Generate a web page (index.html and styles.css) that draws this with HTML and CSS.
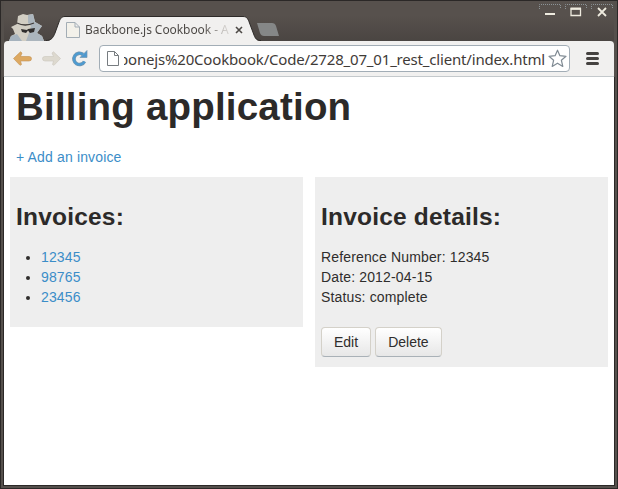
FILE: index.html
```html
<!DOCTYPE html>
<html lang="en">
<head>
<meta charset="utf-8">
<title>Backbone.js Cookbook</title>
<link rel="stylesheet" href="styles.css">
</head>
<body>
<div class="window">
  <header class="titlebar">
    <svg class="incognito" width="36" height="28" viewBox="0 0 36 28">
      <path d="M0 28 L2 23 L6 21 L4 16 L2 14 L8 11 L9 3 L14 1 L18 2 L24 1 L26 9 L33 13 L30 17 L28 20 L33 23 L35 28 Z" fill="#d2cec3"/>
      <path d="M19 10 L19 2 L24 1 L26 9 L33 13 L30 17 L28 20 L33 23 L35 28 H17 L20 20 L22 13 Z" fill="#abb5bd"/>
      <path d="M8 10 Q16 14 25 10" fill="none" stroke="#3d3937" stroke-width="1.3"/>
      <path d="M12 16 L18 17 L19 16 L26 15 L25 19 L21 20 L19 17.500 L17 20 L13 19 Z" fill="#302e2d"/>
      <path d="M0 28 L2 23 L8 21 L13 28 Z" fill="#a5b2bd"/>
    </svg>
    <div class="tab">
      <svg class="tab-shape" width="216" height="26" viewBox="0 0 216 26">
        <path d="M0 26 V25 C5 25 7 22 9 17 L13 6 C14.500 2 16 .500 19 .500 H197 C201 .500 202 3 203.500 7 L208 19 C209.500 23 211 25 215 25 V26 Z" fill="#f1f0ef"/>
        <path d="M0 24.500 C5 24.500 7 22 9 17 L13 6 C14.500 2 16 .500 19 .500 H197 C201 .500 202 3 203.500 7 L208 19 C209.500 23 211 24.500 215 24.500" fill="none" stroke="#2d2a28"/>
      </svg>
      <svg class="tab-page" width="14" height="16" viewBox="0 0 14 16"><path d="M.500 .500 H9 L13.500 5 V15.500 H.500 Z M9 .500 V5 H13.500" fill="#f3f1ea" stroke="#a3adb5"/></svg>
      <span class="tab-title">Backbone.js Cookbook - A</span>
      <svg class="tab-close" width="8" height="8" viewBox="0 0 8 8"><path d="M1 1 L7 7 M7 1 L1 7" stroke="#4d4946" stroke-width="1.600"/></svg>
    </div>
    <svg class="new-tab" width="24" height="15" viewBox="0 0 24 15"><path d="M1 1 H16 Q19 1 20 4 L23 14 H8 Q5 14 4 11 Z" fill="#858787"/></svg>
    <div class="controls">
      <svg width="22" height="14" viewBox="0 0 22 14"><path d="M.500 5 V.500 H21.500 V5" fill="none" stroke="#8b9396" stroke-dasharray="1 1"/><path d="M6 10 H16" stroke="#eeebdf" stroke-width="2"/></svg>
      <svg width="22" height="14" viewBox="0 0 22 14"><path d="M.500 5 V.500 H21.500 V5" fill="none" stroke="#8b9396" stroke-dasharray="1 1"/><path d="M6 11.500 V5 H15.500 V11.500 Z" fill="none" stroke="#eeebdf" stroke-width="1.300"/><path d="M5.500 4.500 H16" stroke="#eeebdf" stroke-width="2"/></svg>
      <svg width="22" height="14" viewBox="0 0 22 14"><path d="M.500 5 V.500 H21.500 V5" fill="none" stroke="#8b9396" stroke-dasharray="1 1"/><path d="M7 4 L15 12 M15 4 L7 12" stroke="#eeebdf" stroke-width="1.800"/></svg>
    </div>
  </header>
  <nav class="toolbar">
    <svg class="back" width="19" height="15" viewBox="0 0 19 15"><path d="M.500 7.500 L7.500 .800 L9 2 L7.500 5.500 H16 Q18.500 5.500 18.500 7.500 Q18.500 10 16 10 H7.500 L8.500 13.500 L7 14.300 Z" fill="#dda962" stroke="#c39150" stroke-width=".6"/></svg>
    <svg class="forward" width="19" height="15" viewBox="0 0 19 15"><path d="M18.500 7.500 L11.500 .800 L10 2 L11.500 5.500 H3 Q.500 5.500 .500 7.500 Q.500 10 3 10 H11.500 L10.500 13.500 L12 14.300 Z" fill="#ddd9cf" stroke="#cbc6bc" stroke-width=".6"/></svg>
    <svg class="reload" width="17" height="17" viewBox="0 0 17 17"><path d="M12 4.500 A5.600 5.600 0 1 0 13.500 11.500" fill="none" stroke="#7397b1" stroke-width="3.600"/><path d="M16 .500 V7.500 H9 Z" fill="#4d98cf" stroke="#7397b1" stroke-width=".7"/><path d="M12 4.500 A5.600 5.600 0 1 0 13.500 11.500" fill="none" stroke="#4d9bd1" stroke-width="2.200"/></svg>
    <div class="address">
      <svg class="page" width="12" height="15" viewBox="0 0 12 15"><path d="M.500 .500 H7.500 L11.500 4.500 V14.500 H.500 Z M7.500 .500 V4.500 H11.500" fill="#fff" stroke="#777c80"/></svg>
      <div class="url"><span>bonejs%20Cookbook/Code/2728_07_01_rest_client/index.html</span></div>
      <svg class="star" width="19" height="19" viewBox="0 0 19 19"><path d="M9.500 1.200 L11.900 6.700 L18 7.300 L13.400 11.300 L14.800 17.400 L9.500 14.200 L4.200 17.400 L5.600 11.300 L1 7.300 L7.100 6.700 Z" fill="#fff" stroke="#7f8a93" stroke-width="1.200" stroke-linejoin="round"/></svg>
    </div>
    <svg class="menu" width="13" height="13" viewBox="0 0 13 13"><path d="M1.500 1.500 H11.500 M1.500 6.500 H11.500 M1.500 11.500 H11.500" stroke="#454240" stroke-width="3" stroke-linecap="round"/></svg>
  </nav>
  <main class="page-body">
    <h1>Billing application</h1>
    <p class="add"><a>+ Add an invoice</a></p>
    <div class="columns">
      <section class="panel">
        <h3>Invoices:</h3>
        <ul>
          <li><a>12345</a></li>
          <li><a>98765</a></li>
          <li><a>23456</a></li>
        </ul>
      </section>
      <section class="panel">
        <h3>Invoice details:</h3>
        <div>Reference Number: 12345</div>
        <div>Date: 2012-04-15</div>
        <div>Status: complete</div>
        <div class="actions"><button>Edit</button><button>Delete</button></div>
      </section>
    </div>
  </main>
</div>
</body>
</html>
```
FILE: styles.css
```css
* { box-sizing: border-box; }
body { margin: 0; background: #2d2a29; }
svg { display: block; flex: none; }
.window {
  width: 618px;
  height: 489px;
  display: flex;
  flex-direction: column;
  padding: 1px 4px 4px;
  background: #55504c;
  border-top: 0;
  box-shadow: inset 0 0 0 1px #2b2827;
}
.titlebar {
  height: 40px;
  flex: none;
  display: flex;
  align-items: flex-end;
  background: linear-gradient(#57514d 35%, #4a4542);
}
.incognito { margin-left: 5px; }
.tab {
  display: grid;
  grid-template-columns: 20px 14px 5px 144px 6px 8px 1fr;
  width: 216px;
  height: 25px;
  margin-left: 1px;
  align-items: center;
}
.tab-shape { grid-area: 1 / 1 / 2 / 8; align-self: start; }
.tab-page { grid-area: 1 / 2; margin-top: 2px; }
.tab-title {
  grid-area: 1 / 4;
  margin-top: 2px;
  font: 12px/18px "Noto Sans", sans-serif;
  letter-spacing: -.07px;
  white-space: nowrap;
  color: transparent;
  background: linear-gradient(90deg, #4a4643 118px, #d0cdca 140px);
  -webkit-background-clip: text;
  background-clip: text;
}
.tab-close { grid-area: 1 / 6; margin-top: 2px; }
.new-tab { margin: 0 0 4px -6px; }
.controls { display: flex; gap: 4px; margin: 0 1px 0 auto; align-self: flex-start; padding-top: 3px; }
.toolbar {
  height: 36px;
  flex: none;
  display: flex;
  align-items: center;
  padding: 0 15px 2px 9px;
  background: #f1f0ef;
  border-bottom: 1px solid #c4c9cc;
  border-radius: 4px 4px 0 0;
}
.back, .forward, .reload, .menu { margin-top: 2px; }
.forward { margin-left: 10px; }
.reload { margin-left: 10px; }
.address {
  display: flex;
  align-items: center;
  width: 471px;
  height: 27px;
  margin: 2px 0 0 11px;
  padding: 0 2px 0 7px;
  background: #fff;
  border: 1px solid #a2adb6;
  border-radius: 4px;
}
.url {
  flex: 1;
  display: flex;
  justify-content: flex-end;
  overflow: hidden;
  margin: 0 3px 0 5px;
  font: 15px/22px "Noto Sans", sans-serif;
  letter-spacing: -.18px;
  color: #3f3b38;
  white-space: nowrap;
}
.menu { margin-left: auto; }
.page-body {
  flex: 1;
  padding: 10px 6px 0;
  background: #fff;
  box-shadow: 0 0 0 1px #2b2827;
  clip-path: inset(0 -1px -1px -1px);
  font: 14px/20px "Liberation Sans", Arial, sans-serif;
  letter-spacing: .15px;
  color: #2f2d2c;
}
a { color: #3b8dc8; }
h1, h3 { margin: 0; line-height: 40px; letter-spacing: .2px; color: #2c2a29; }
h1 { font-size: 38.5px; padding-left: 6px; }
h3 { font-size: 24.5px; margin-bottom: 10px; }
.add { margin: 20px 0 10px 6px; }
.columns { display: grid; grid-template-columns: 293px 293px; gap: 12px; align-items: start; }
.panel { padding: 20px 6px 10px; background: #eee; }
ul { margin: 0 0 10px; padding-left: 25px; }
.actions { display: flex; gap: 4px; margin-top: 20px; }
button {
  height: 30px;
  padding: 4px 12px;
  font: 14px/20px "Liberation Sans", Arial, sans-serif;
  color: #2f2d2c;
  background: linear-gradient(#fff, #e7e7e7);
  border: 1px solid #d4d1c9;
  border-bottom-color: #a9b1b7;
  border-radius: 4px;
}
```
